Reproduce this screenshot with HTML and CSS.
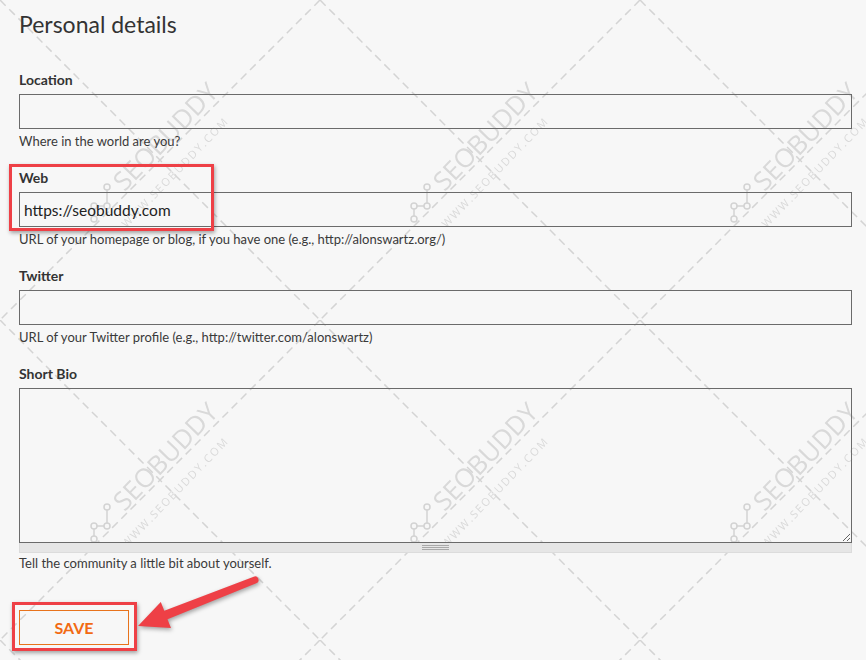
FILE: index.html
```html
<!DOCTYPE html>
<html lang="en">
<head>
<meta charset="utf-8">
<title>Personal details</title>
<link rel="stylesheet" href="styles.css">
</head>
<body>
<svg class="watermark" width="866" height="660" viewBox="0 0 866 660" aria-hidden="true">
  <defs>
    <pattern id="wm" x="0" y="0" width="320" height="320" patternUnits="userSpaceOnUse">
      <g class="wm-lines">
        <line x1="0" y1="0" x2="320" y2="320"/>
        <line x1="320" y1="0" x2="0" y2="320"/>
      </g>
      <text class="wm-big" x="172" y="143" text-anchor="middle" transform="rotate(-46 172 143)">SEOBUDDY</text>
      <text class="wm-small" x="178" y="175" text-anchor="middle" transform="rotate(-46 178 175)">WWW.SEOBUDDY.COM</text>
      <g class="wm-icon">
        <path d="M107 190 V203 M104 206 H97 M94 209 V216"/>
        <circle cx="107" cy="187" r="3"/>
        <circle cx="107" cy="206" r="3"/>
        <circle cx="94" cy="206" r="3"/>
        <circle cx="94" cy="219" r="3"/>
      </g>
    </pattern>
  </defs>
  <rect width="866" height="660" fill="url(#wm)"/>
</svg>

<main class="page">
  <h2 class="title">Personal details</h2>

  <div class="field">
    <label class="label" for="loc">Location</label>
    <input class="input" id="loc" type="text" value="">
    <div class="help">Where in the world are you?</div>
  </div>

  <div class="field">
    <label class="label" for="web">Web</label>
    <input class="input" id="web" type="text" value="https://seobuddy.com">
    <div class="help">URL of your homepage or blog, if you have one (e.g., http://alonswartz.org/)</div>
  </div>

  <div class="field">
    <label class="label" for="tw">Twitter</label>
    <input class="input" id="tw" type="text" value="">
    <div class="help">URL of your Twitter profile (e.g., http://twitter.com/alonswartz)</div>
  </div>

  <div class="field field-bio">
    <label class="label" for="bio">Short Bio</label>
    <textarea class="textarea" id="bio"></textarea>
    <div class="grippie"><span class="grip-lines"></span></div>
    <div class="help help-bio">Tell the community a little bit about yourself.</div>
  </div>

  <button class="save" type="button">Save</button>
</main>

<div class="mark mark-web"></div>
<div class="mark mark-save"></div>
<svg class="arrow" width="866" height="660" viewBox="0 0 866 660" aria-hidden="true">
  <path d="M253.7 576.7 L164.3 610.8 L160.8 602 L138 626 L171 628 L167.5 619.2 L256.3 583.3 A3.5 3.5 0 0 0 253.7 576.7 Z"/>
</svg>
</body>
</html>
```

FILE: styles.css
```css
html, body {
  margin: 0;
  padding: 0;
  background: #f7f7f7;
}

body {
  position: relative;
  width: 866px;
  height: 660px;
  overflow: hidden;
  font-family: Lato, "Noto Sans", sans-serif;
  color: #333;
}

.watermark {
  position: absolute;
  left: 0;
  top: 0;
  z-index: 0;
}

.wm-lines line {
  stroke: #d4d4d4;
  stroke-width: 1.5;
  stroke-dasharray: 8 5;
}

.wm-big {
  font-family: "Open Sans", sans-serif;
  font-size: 26px;
  font-weight: 400;
  fill: #d9d9d9;
}

.wm-small {
  font-family: "Open Sans", sans-serif;
  font-size: 11px;
  letter-spacing: 1.8px;
  fill: #dadada;
}

.wm-icon path,
.wm-icon circle {
  fill: none;
  stroke: #d3d3d3;
  stroke-width: 1.5;
}

.page {
  position: relative;
  z-index: 1;
  width: 833px;
  padding: 9px 0 0 19px;
}

.title {
  margin: 0 0 32px;
  font-size: 23px;
  font-weight: 400;
  line-height: 30px;
  color: #333;
}

.field {
  margin-bottom: 19px;
}

.label {
  display: block;
  font-size: 14px;
  font-weight: 700;
  line-height: 18px;
  color: #333;
}

.input {
  display: block;
  box-sizing: border-box;
  width: 833px;
  height: 35px;
  margin: 5px 0 0;
  padding: 0 4px;
  border: 1px solid #6b6b6b;
  border-radius: 0;
  background: transparent;
  font-family: Lato, "Noto Sans", sans-serif;
  font-size: 15.5px;
  color: #222;
  outline: none;
}

.help {
  margin-top: 3px;
  font-size: 13px;
  line-height: 18px;
  color: #3a3a3a;
}

.textarea {
  display: block;
  box-sizing: border-box;
  width: 833px;
  height: 155px;
  margin: 5px 0 0;
  padding: 4px;
  border: 1px solid #6b6b6b;
  border-radius: 0;
  background: transparent;
  font-family: Lato, "Noto Sans", sans-serif;
  font-size: 14px;
  resize: vertical;
  outline: none;
}

.grippie {
  box-sizing: border-box;
  width: 833px;
  height: 10px;
  border: 1px solid #dcdcdc;
  border-top: none;
  background: #e6e6e6;
  display: flex;
  justify-content: center;
  padding-top: 2px;
}

.grip-lines {
  width: 27px;
  height: 6px;
  background: repeating-linear-gradient(to bottom, #a9a9a9 0, #a9a9a9 1px, transparent 1px, transparent 2px);
}

.help-bio {
  margin-top: 1px;
}

.save {
  display: block;
  box-sizing: border-box;
  width: 110px;
  height: 35px;
  margin-top: 38px;
  padding: 0;
  border: 1px solid #e8731c;
  border-radius: 0;
  background: transparent;
  font-family: Lato, "Noto Sans", sans-serif;
  font-size: 16px;
  font-weight: 700;
  text-transform: uppercase;
  color: #f26a12;
  cursor: pointer;
}

.mark {
  position: absolute;
  z-index: 2;
  box-sizing: border-box;
  border: 3px solid #ee4046;
  box-shadow: 1px 2px 4px rgba(0, 0, 0, 0.35);
  pointer-events: none;
}

.mark-web {
  left: 9px;
  top: 164px;
  width: 205px;
  height: 67px;
}

.mark-save {
  left: 12px;
  top: 602px;
  width: 125px;
  height: 49px;
}

.arrow {
  position: absolute;
  left: 0;
  top: 0;
  z-index: 3;
  pointer-events: none;
  filter: drop-shadow(1px 2px 2px rgba(0, 0, 0, 0.35));
}

.arrow path {
  fill: #ee4046;
}
```
